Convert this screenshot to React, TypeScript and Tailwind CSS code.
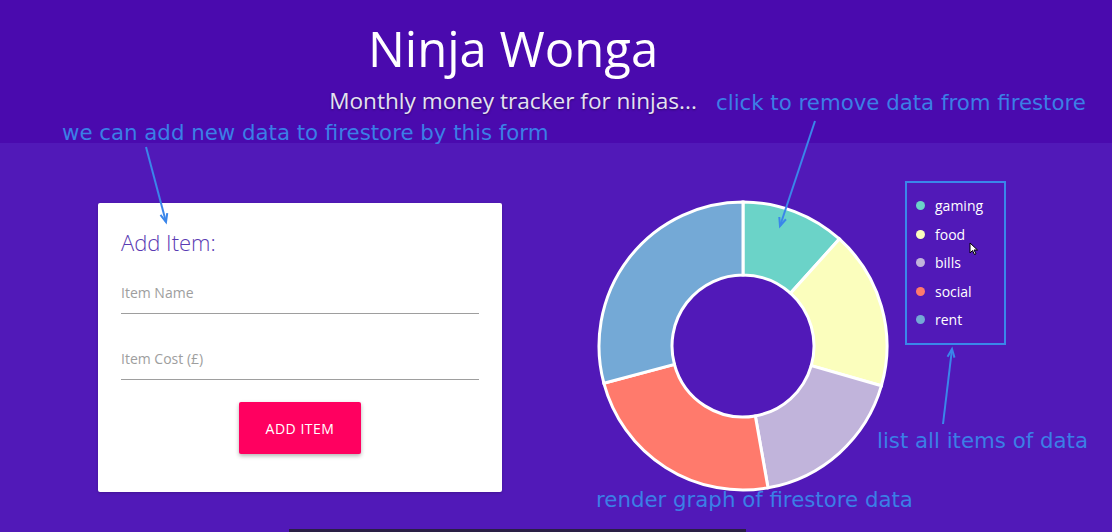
import React from 'react';

const slices = [
  { name: 'gaming', color: '#6bd3c8', from: 0, to: 42 },
  { name: 'food', color: '#fbfebd', from: 42, to: 106 },
  { name: 'bills', color: '#c1b4db', from: 106, to: 170 },
  { name: 'social', color: '#ff7a6c', from: 170, to: 255 },
  { name: 'rent', color: '#74a9d6', from: 255, to: 360 },
];

const CX = 150;
const CY = 150;
const R = 144;
const r = 71;

const pt = (rad: number, deg: number) => {
  const a = ((deg - 90) * Math.PI) / 180;
  return `${CX + rad * Math.cos(a)} ${CY + rad * Math.sin(a)}`;
};

const arc = (from: number, to: number) => {
  const large = to - from > 180 ? 1 : 0;
  return `M ${pt(R, from)} A ${R} ${R} 0 ${large} 1 ${pt(R, to)} L ${pt(r, to)} A ${r} ${r} 0 ${large} 0 ${pt(r, from)} Z`;
};

const Arrow: React.FC<{ x1: number; y1: number; x2: number; y2: number }> = ({ x1, y1, x2, y2 }) => {
  const ang = Math.atan2(y2 - y1, x2 - x1);
  const len = 9;
  const p1 = `${x2 - len * Math.cos(ang - 0.4)},${y2 - len * Math.sin(ang - 0.4)}`;
  const p2 = `${x2 - len * Math.cos(ang + 0.4)},${y2 - len * Math.sin(ang + 0.4)}`;
  return (
    <svg className="absolute left-0 top-0 pointer-events-none" width="1112" height="532" viewBox="0 0 1112 532">
      <line x1={x1} y1={y1} x2={x2} y2={y2} stroke="#3a86ea" strokeWidth="2" />
      <polyline points={`${p1} ${x2},${y2} ${p2}`} fill="none" stroke="#3a86ea" strokeWidth="2" />
    </svg>
  );
};

const Note: React.FC<{ className: string; children: React.ReactNode }> = ({ className, children }) => (
  <div className={`absolute text-[21.3px] leading-none text-[#3b7fe6] whitespace-nowrap font-['DejaVu_Sans',sans-serif] ${className}`}>
    {children}
  </div>
);

const App: React.FC = () => {
  return (
    <div className="relative w-[1112px] h-[532px] overflow-hidden bg-[#5119b8] font-['Open_Sans',sans-serif]">
      <header className="h-[143px] bg-[#4a0aae] flex flex-col items-center pt-[18px] pr-[86px]">
        <h1 className="text-[49px] leading-[60px] text-white font-normal">Ninja Wonga</h1>
        <p className="mt-[9px] text-[22.6px] leading-[28px] text-[#e4e2f2] [text-shadow:0_1px_2px_rgba(0,0,0,0.4)]">
          Monthly money tracker for ninjas...
        </p>
      </header>

      <main className="flex pt-[60px]">
        <div className="ml-[98px] w-[404px] h-[289px] bg-white rounded-[2px] px-[23px] pt-[25px] shadow-[0_1px_3px_rgba(0,0,0,0.2)]">
          <h4 className="text-[22px] leading-[28px] font-light text-[#5a3bb3]">Add Item:</h4>
          <div className="mt-[27px] w-[358px] border-b border-[#9e9e9e] pb-[10px] text-[14px] leading-[20px] text-[#9e9e9e]">
            Item Name
          </div>
          <div className="mt-[35px] w-[358px] border-b border-[#9e9e9e] pb-[10px] text-[14px] leading-[20px] text-[#9e9e9e]">
            Item Cost (£)
          </div>
          <div className="flex justify-center mt-[22px]">
            <button className="w-[122px] h-[52px] bg-[#ff0060] rounded-[2px] text-white text-[14px] tracking-[0.5px] shadow-[0_2px_4px_rgba(0,0,0,0.3)]">
              ADD ITEM
            </button>
          </div>
        </div>

        <div className="ml-[91px] -mt-[7px]">
          <svg width="300" height="300" viewBox="0 0 300 300">
            {slices.map((s) => (
              <path key={s.name} d={arc(s.from, s.to)} fill={s.color} stroke="#ffffff" strokeWidth="3" />
            ))}
          </svg>
        </div>

        <div className="ml-[12px] -mt-[22px] self-start w-[101px] h-[164px] border-2 border-[#3a86ea] pl-[9px] pt-[13px] flex flex-col gap-[9.5px]">
          {slices.map((s) => (
            <div key={s.name} className="flex items-center gap-[10px] h-[19px]">
              <span className="w-[9px] h-[9px] rounded-full" style={{ backgroundColor: s.color }} />
              <span className="text-[14px] text-white">{s.name}</span>
            </div>
          ))}
        </div>
      </main>

      <Note className="left-[62px] top-[122px]">we can add new data to firestore by this form</Note>
      <Note className="left-[716px] top-[92px]">click to remove data from firestore</Note>
      <Note className="left-[877px] top-[430px]">list all items of data</Note>
      <Note className="left-[596px] top-[489px]">render graph of firestore data</Note>

      <Arrow x1={146} y1={147} x2={166} y2={222} />
      <Arrow x1={815} y1={121} x2={780} y2={226} />
      <Arrow x1={943} y1={424} x2={952} y2={349} />

      <svg className="absolute left-[969px] top-[242px]" width="10" height="14" viewBox="0 0 10 14">
        <path d="M1 1 L1 11 L3.5 8.5 L5.5 12.5 L7 11.8 L5 8 L8.5 8 Z" fill="#ffffff" stroke="#000000" strokeWidth="1" />
      </svg>

      <div className="absolute left-[289px] top-[529px] w-[457px] h-[3px] bg-[#2a1f45]" />
    </div>
  );
};

export default App;
